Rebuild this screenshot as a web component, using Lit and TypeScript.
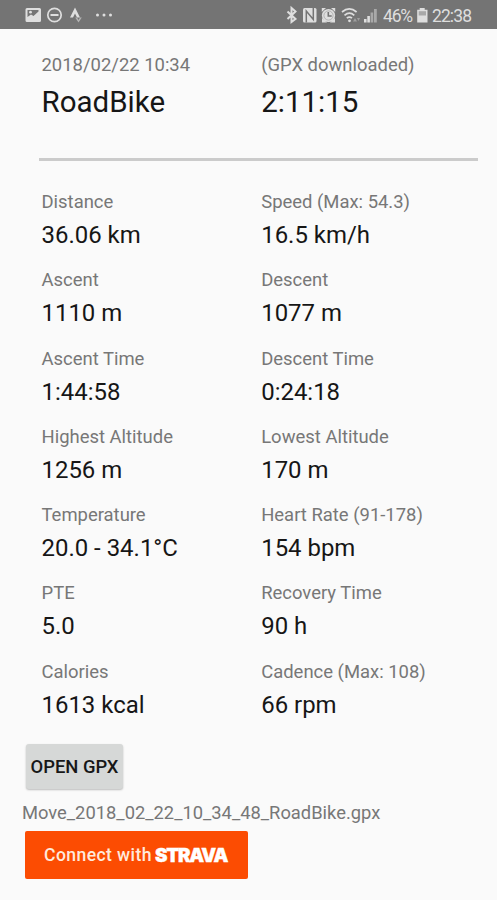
import { LitElement, html, css } from "lit";
import { customElement, property } from "lit/decorators.js";

interface Metric {
  label: string;
  value: string;
}

const METRICS: Metric[] = [
  { label: "Distance", value: "36.06 km" },
  { label: "Speed (Max: 54.3)", value: "16.5 km/h" },
  { label: "Ascent", value: "1110 m" },
  { label: "Descent", value: "1077 m" },
  { label: "Ascent Time", value: "1:44:58" },
  { label: "Descent Time", value: "0:24:18" },
  { label: "Highest Altitude", value: "1256 m" },
  { label: "Lowest Altitude", value: "170 m" },
  { label: "Temperature", value: "20.0 - 34.1°C" },
  { label: "Heart Rate (91-178)", value: "154 bpm" },
  { label: "PTE", value: "5.0" },
  { label: "Recovery Time", value: "90 h" },
  { label: "Calories", value: "1613 kcal" },
  { label: "Cadence (Max: 108)", value: "66 rpm" },
];

@customElement("status-bar")
class StatusBar extends LitElement {
  static styles = css`
    :host {
      display: flex;
      justify-content: space-between;
      height: 29px;
      box-sizing: border-box;
      background: #747474;
      color: #dedede;
      font-size: 17.5px;
      line-height: 32px;
    }
    svg {
      display: block;
      height: 29px;
    }
    .right {
      display: flex;
      padding-right: 26px;
    }
    .percent {
      width: 33px;
      letter-spacing: -1.2px;
    }
    .clock {
      width: 39px;
      letter-spacing: -0.9px;
      white-space: nowrap;
    }
  `;

  render() {
    return html`
      <svg width="130" height="29" viewBox="0 0 130 29" fill="#dedede">
        <path fill-rule="evenodd" d="M27 8h12.500q1.500 0 1.500 1.500v11q0 1.500-1.500 1.500h-12.500q-1.500 0-1.500-1.500v-11q0-1.500 1.500-1.500zM27.500 10v7l3.500-2.500 2.500 1.500 5-4.500v-1.500z"/>
        <circle cx="30.500" cy="12.200" r="1.400"/>
        <circle cx="54.500" cy="15" r="6.700" fill="none" stroke="#dedede" stroke-width="1.700"/>
        <path d="M50.500 14h8v2h-8z"/>
        <path d="M70 17.500l5-10 5 10h-3l-2-4-2 4z"/>
        <path opacity=".6" d="M75.200 17.500h1.800l1.500 2.500 1.500-2.500h1.800l-3.300 5z"/>
        <circle cx="97.500" cy="15" r="1.500"/><circle cx="104" cy="15" r="1.500"/><circle cx="110.500" cy="15" r="1.500"/>
      </svg>
      <div class="right">
        <svg width="99" height="29" viewBox="284 0 99 29" fill="#dedede">
          <path d="M287.500 11.500l8 7.500-4 3v-14l4 3.500-8 7.500" fill="none" stroke="#dedede" stroke-width="2"/>
          <rect x="303" y="8" width="13.500" height="14.500" rx="1.500"/>
          <path d="M306.300 22.500v-11.500l7 8.500v-11.500" fill="none" stroke="#747474" stroke-width="1.500"/>
          <circle cx="328.500" cy="15.500" r="6.600"/>
          <path d="M321.800 8h4.200l-4.200 4zM335.200 8h-4.200l4.200 4zM322 18v4.500h5zM335 18v4.500h-5z"/>
          <circle cx="328.500" cy="15.500" r="4.600" fill="none" stroke="#747474" stroke-opacity=".5" stroke-width=".8"/>
          <path d="M328.300 12v4h3.400" fill="none" stroke="#747474" stroke-width="1.600"/>
          <g fill="none" stroke="#dedede" stroke-width="1.700">
            <path d="M342 12q7.300-6.200 14.600 0M344.500 15.300q4.900-4.300 9.800 0M346.800 18.200q2.600-2.200 5.200 0"/>
          </g>
          <circle cx="349.500" cy="20.800" r="1.400"/>
          <path opacity=".4" d="M353 21.500l2-3.500 2 3.500zM357 18h3l-1.500 3z"/>
          <path d="M364 19h2.600v3.500h-2.600zM367.300 16h2.600v6.500h-2.600z"/>
          <path opacity=".5" d="M370.600 12.500h2.600v10h-2.600zM374 9h2.800v13.500h-2.800z"/>
        </svg>
        <span class="percent">46%</span>
        <svg width="16" height="29" viewBox="416 0 16 29">
          <path fill="#dedede" d="M419.700 8h5v1.700h2.800v12.800h-10.300v-12.800h2.500z"/>
          <path fill="#a8a8a8" d="M418.700 11.200h7.300v4.300h-7.300z"/>
        </svg>
        <span class="clock">22:38</span>
      </div>
    `;
  }
}

@customElement("metric-cell")
class MetricCell extends LitElement {
  @property() label = "";
  @property() value = "";
  @property({ type: Boolean, reflect: true }) large = false;

  static styles = css`
    :host {
      display: block;
      white-space: nowrap;
    }
    .label {
      color: #777;
      font-size: 18.45px;
      line-height: 22px;
    }
    .value {
      margin-top: 8px;
      color: #161616;
      font-size: 23.95px;
      line-height: 28px;
    }
    :host([large]) .value {
      font-size: 29.5px;
      line-height: 34px;
      margin-top: 9px;
    }
  `;

  render() {
    return html`
      <div class="label">${this.label}</div>
      <div class="value">${this.value}</div>
    `;
  }
}

@customElement("app-root")
class AppRoot extends LitElement {
  static styles = css`
    :host {
      display: block;
      height: 900px;
      overflow: hidden;
      background: #fafafa;
      font-family: Roboto, sans-serif;
    }
    .summary,
    .metrics {
      display: grid;
      grid-template-columns: 219.7px 1fr;
      padding-left: 41.5px;
    }
    .summary {
      height: 129px;
      padding-top: 25px;
      box-sizing: border-box;
    }
    .divider {
      height: 3px;
      margin: 0 19px 0 39px;
      background: #cbcbcb;
    }
    .metrics {
      padding-top: 30px;
      grid-auto-rows: 78.3px;
    }
    .actions {
      display: flex;
      flex-direction: column;
      align-items: flex-start;
      padding-left: 25px;
      margin-top: 5.4px;
    }
    button {
      border: 0;
      padding: 0;
      font-family: inherit;
      white-space: nowrap;
    }
    .open {
      width: 97px;
      height: 45px;
      margin-left: 1px;
      border-radius: 3px;
      background: #d6d8d7;
      box-shadow: 0 1px 2px #bbb;
      color: #171717;
      font-size: 18.4px;
      font-weight: 500;
    }
    .file {
      margin: 13px 0 7px -3px;
      color: #777;
      font-size: 18.35px;
      line-height: 22px;
    }
    .strava {
      display: flex;
      align-items: center;
      width: 223px;
      height: 48px;
      padding-left: 19px;
      border-radius: 2px;
      background: #fc4c02;
      color: #ffe9dc;
      font-size: 17.6px;
      font-weight: 500;
      letter-spacing: 0.4px;
    }
    .brand {
      margin-left: 3px;
      color: #fff;
      font-family: Inter, Roboto, sans-serif;
      font-size: 18.8px;
      font-weight: 900;
      letter-spacing: -1.2px;
      -webkit-text-stroke: 0.4px #fff;
    }
  `;

  render() {
    return html`
      <status-bar></status-bar>
      <section class="summary">
        <metric-cell large label="2018/02/22 10:34" value="RoadBike"></metric-cell>
        <metric-cell large label="(GPX downloaded)" value="2:11:15"></metric-cell>
      </section>
      <div class="divider"></div>
      <section class="metrics">
        ${METRICS.map((m) => html`<metric-cell .label=${m.label} .value=${m.value}></metric-cell>`)}
      </section>
      <section class="actions">
        <button class="open">OPEN GPX</button>
        <div class="file">Move_2018_02_22_10_34_48_RoadBike.gpx</div>
        <button class="strava"><span>Connect with</span><span class="brand">STRAVA</span></button>
      </section>
    `;
  }
}
